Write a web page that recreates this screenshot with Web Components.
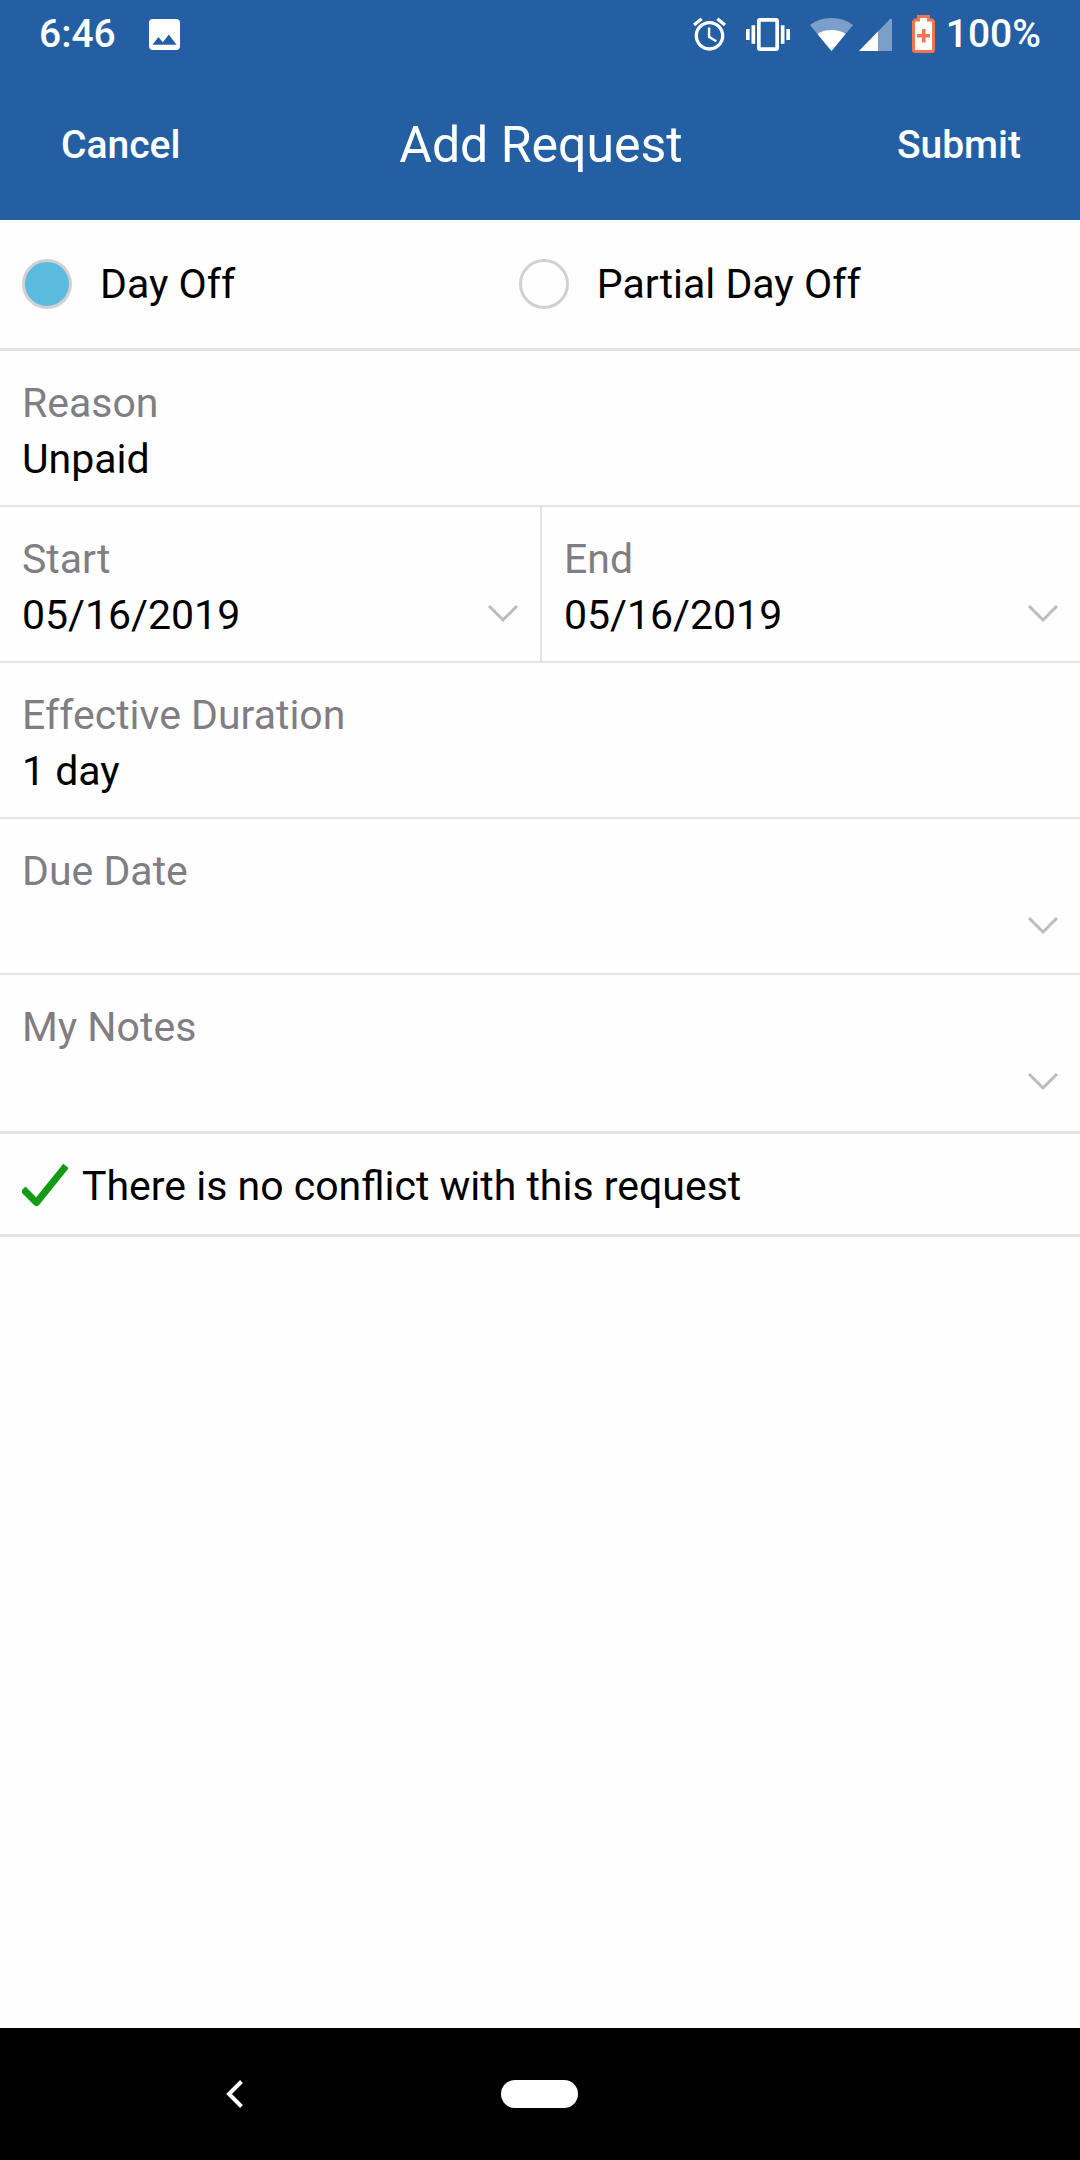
<!DOCTYPE html>
<html lang="en">
<head>
  <meta charset="utf-8">
  <meta name="viewport" content="width=device-width, initial-scale=1">
  <title>Add Request</title>
  <style>
    :root {
      --brand: #245fa3;
      --accent: #5bbbde;
      --line: #e4e3e6;
      --muted: #807e82;
      --gutter: 22px;
    }

    body {
      background-color: #fefefe;
      color: #000000;
      font-family: Roboto, sans-serif;
      font-size: 41px;
      line-height: 56px;
      margin: 0;
    }
  </style>
</head>
<body>
  <request-app>
    <status-bar slot="top" time="6:46" battery="100%"></status-bar>
    <app-toolbar slot="top">
      <toolbar-button slot="start">Cancel</toolbar-button>
      Add Request
      <toolbar-button slot="end">Submit</toolbar-button>
    </app-toolbar>

    <day-type></day-type>
    <form-field label="Reason" value="Unpaid"></form-field>
    <field-pair>
      <form-field label="Start" value="05/16/2019" picker></form-field>
      <form-field label="End" value="05/16/2019" picker></form-field>
    </field-pair>
    <form-field label="Effective Duration" value="1 day"></form-field>
    <form-field label="Due Date" value="" picker></form-field>
    <form-field label="My Notes" value="" picker last></form-field>
    <conflict-message>There is no conflict with this request</conflict-message>

    <nav-bar slot="bottom"></nav-bar>
  </request-app>

  <script>
    class BaseElement extends HTMLElement {
      constructor() {
        super();

        const template = document.createElement('template');
        template.innerHTML = this.constructor.markup();

        this._shadow = this.attachShadow({ mode: 'open' });
        this._shadow.appendChild(template.content.cloneNode(true));
      }
    }

    class RequestApp extends BaseElement {
      static markup() {
        return `
          <style>
            :host {
              display: flex;
              flex-direction: column;
              min-height: 100vh;
            }

            header {
              background-color: var(--brand);
              color: #FFFFFF;
            }

            main {
              flex: 1;
            }
          </style>

          <header><slot name="top"></slot></header>
          <main><slot></slot></main>
          <slot name="bottom"></slot>
        `;
      }
    }

    class StatusBar extends BaseElement {
      static markup() {
        return `
          <style>
            :host {
              align-items: center;
              display: flex;
              font-size: 39px;
              font-weight: 500;
              height: 68px;
              justify-content: space-between;
              padding: 0 39px;
            }

            .Group {
              align-items: center;
              display: flex;
              gap: 20px;
            }

            .Group--left { gap: 33px; }
            .Group--signal { gap: 6px; }
            .Group--battery { gap: 11px; }

            svg {
              display: block;
              fill: #FFFFFF;
            }
          </style>

          <div class="Group Group--left">
            <span id="time"></span>
            <svg width="31" height="31" viewBox="3 3 18 18">
              <path d="M21 19V5c0-1.1-.9-2-2-2H5c-1.1 0-2 .9-2 2v14c0 1.1.9 2 2 2h14c1.1 0 2-.9 2-2zM8.5 13.5l2.5 3.01L14.5 12l4.5 6H5l3.5-4.5z"/>
            </svg>
          </div>

          <div class="Group">
            <svg width="33" height="34" viewBox="2 1.8 20 20.2">
              <path d="M22 5.72l-4.6-3.86-1.29 1.53 4.6 3.86L22 5.72zM7.88 3.39L6.6 1.86 2 5.71l1.29 1.53 4.59-3.85zM12.5 8H11v6l4.75 2.85.75-1.23-4-2.37V8zM12 4c-4.97 0-9 4.03-9 9s4.02 9 9 9c4.97 0 9-4.03 9-9s-4.03-9-9-9zm0 16c-3.87 0-7-3.13-7-7s3.13-7 7-7 7 3.13 7 7-3.13 7-7 7z"/>
            </svg>
            <svg width="44" height="33" viewBox="0 3 24 18">
              <path d="M0 15h2V9H0v6zm3 2h2V7H3v10zm19-8v6h2V9h-2zm-3 8h2V7h-2v10zM16.5 3h-9C6.67 3 6 3.67 6 4.5v15c0 .83.67 1.5 1.5 1.5h9c.83 0 1.5-.67 1.5-1.5v-15c0-.83-.67-1.5-1.5-1.5zM16 19H8V5h8v14z"/>
            </svg>
            <div class="Group Group--signal">
              <svg width="43" height="33" viewBox="0 0 43 33">
                <path opacity=".4" d="M21.5 33L0 7Q9 0 21.5 0T43 7z"/>
                <path d="M21.5 33L7.5 16Q13 12 21.5 12T35.5 16z"/>
              </svg>
              <svg width="33" height="33" viewBox="0 0 33 33">
                <path opacity=".4" d="M0 33L31 1q2-1 2 1v31z"/>
                <path d="M0 33L19 13.5V33z"/>
              </svg>
            </div>
            <div class="Group Group--battery">
              <svg width="23" height="38" viewBox="0 0 23 38">
                <path stroke="#f4744d" stroke-width="3" d="M6.5 1.5h10V5H20l1.5 1.5V35q0 1.5-1.5 1.5H3q-1.5 0-1.5-1.5V6.5L3 5h3.5z"/>
                <path fill="#f4744d" d="M10 14h3.5v5H18v3.5h-4.5v5H10v-5H5V19h5z"/>
              </svg>
              <span id="battery"></span>
            </div>
          </div>
        `;
      }

      connectedCallback() {
        this._shadow.querySelector('#time').textContent = this.getAttribute('time');
        this._shadow.querySelector('#battery').textContent = this.getAttribute('battery');
      }
    }

    class AppToolbar extends BaseElement {
      static markup() {
        return `
          <style>
            :host {
              align-items: center;
              box-sizing: border-box;
              display: grid;
              grid-template-columns: 1fr auto 1fr;
              height: 152px;
              padding: 2px 59px 0 61px;
            }

            h1 {
              font-size: 50px;
              font-weight: 400;
              margin: 0;
            }

            .End {
              justify-self: end;
            }
          </style>

          <div><slot name="start"></slot></div>
          <h1><slot></slot></h1>
          <div class="End"><slot name="end"></slot></div>
        `;
      }
    }

    class ToolbarButton extends BaseElement {
      static markup() {
        return `
          <style>
            :host {
              display: block;
            }

            button {
              background: none;
              border: 0;
              color: inherit;
              cursor: pointer;
              display: block;
              font: inherit;
              font-size: 39px;
              font-weight: 500;
              padding: 0;
            }
          </style>

          <button type="button"><slot></slot></button>
        `;
      }
    }

    class DayType extends BaseElement {
      static markup() {
        return `
          <style>
            :host {
              border-bottom: 3px solid var(--line);
              display: grid;
              grid-template-columns: 46% 1fr;
              padding: 36px 0;
            }

            label {
              align-items: center;
              display: flex;
              gap: 28px;
              padding-left: var(--gutter);
            }

            input {
              appearance: none;
              border: 3px solid #d2d0d3;
              border-radius: 50%;
              box-sizing: border-box;
              height: 50px;
              margin: 0;
              width: 50px;
            }

            input:checked {
              background-color: var(--accent);
            }
          </style>

          <label><input type="radio" name="day-type" value="full" checked>Day Off</label>
          <label><input type="radio" name="day-type" value="partial">Partial Day Off</label>
        `;
      }
    }

    class FieldPair extends BaseElement {
      static markup() {
        return `
          <style>
            :host {
              display: grid;
              grid-template-columns: repeat(2, minmax(0, 1fr));
            }

            ::slotted(:last-child) {
              border-left: 2px solid var(--line);
            }
          </style>

          <slot></slot>
        `;
      }
    }

    class FormField extends BaseElement {
      static markup() {
        return `
          <style>
            :host {
              border-bottom: 2px solid var(--line);
              display: block;
              padding: 24px var(--gutter) 18px;
            }

            :host([last]) {
              border-bottom-width: 3px;
              padding-bottom: 20px;
            }

            label {
              color: var(--muted);
              display: block;
            }

            .Row {
              align-items: center;
              display: flex;
            }

            input {
              background: none;
              border: 0;
              color: inherit;
              flex: 1;
              font: inherit;
              height: 56px;
              min-width: 0;
              outline: 0;
              padding: 0;
            }

            svg {
              display: none;
              fill: none;
              flex: none;
              stroke: #bdbbbe;
              stroke-width: 3;
            }

            :host([picker]) svg {
              display: block;
            }
          </style>

          <label for="value"></label>
          <div class="Row">
            <input id="value" type="text" readonly>
            <svg width="30" height="20" viewBox="0 0 30 20"><path d="M1 1l14 14L29 1"/></svg>
          </div>
        `;
      }

      connectedCallback() {
        this._shadow.querySelector('label').textContent = this.getAttribute('label');
        this._shadow.querySelector('input').value = this.getAttribute('value');
      }
    }

    class ConflictMessage extends BaseElement {
      static markup() {
        return `
          <style>
            :host {
              align-items: center;
              border-bottom: 3px solid var(--line);
              display: flex;
              gap: 14px;
              padding: 24px var(--gutter) 20px;
            }

            svg {
              fill: none;
              flex: none;
              stroke: #149b14;
              stroke-width: 7;
            }
          </style>

          <svg width="46" height="46" viewBox="0 0 46 46"><path stroke-linejoin="round" d="M1 26L14.5 39.5 44 3"/></svg>
          <span><slot></slot></span>
        `;
      }
    }

    class NavBar extends BaseElement {
      static markup() {
        return `
          <style>
            :host {
              align-items: center;
              background-color: #000000;
              display: grid;
              grid-template-columns: repeat(3, 1fr);
              height: 132px;
              justify-items: center;
              padding: 0 82px;
            }

            button {
              background: none;
              border: 0;
              cursor: pointer;
              padding: 0;
            }

            svg {
              display: block;
              fill: none;
              stroke: #FFFFFF;
              stroke-width: 4;
            }

            .Home {
              background-color: #FFFFFF;
              border-radius: 14px;
              height: 28px;
              width: 77px;
            }
          </style>

          <button type="button" aria-label="Back">
            <svg width="17" height="28" viewBox="0 0 17 28"><path d="M15.5 1.5L3 14l12.5 12.5"/></svg>
          </button>
          <button type="button" class="Home" aria-label="Home"></button>
        `;
      }
    }

    customElements.define('request-app', RequestApp);
    customElements.define('status-bar', StatusBar);
    customElements.define('app-toolbar', AppToolbar);
    customElements.define('toolbar-button', ToolbarButton);
    customElements.define('day-type', DayType);
    customElements.define('field-pair', FieldPair);
    customElements.define('form-field', FormField);
    customElements.define('conflict-message', ConflictMessage);
    customElements.define('nav-bar', NavBar);
  </script>
</body>
</html>
